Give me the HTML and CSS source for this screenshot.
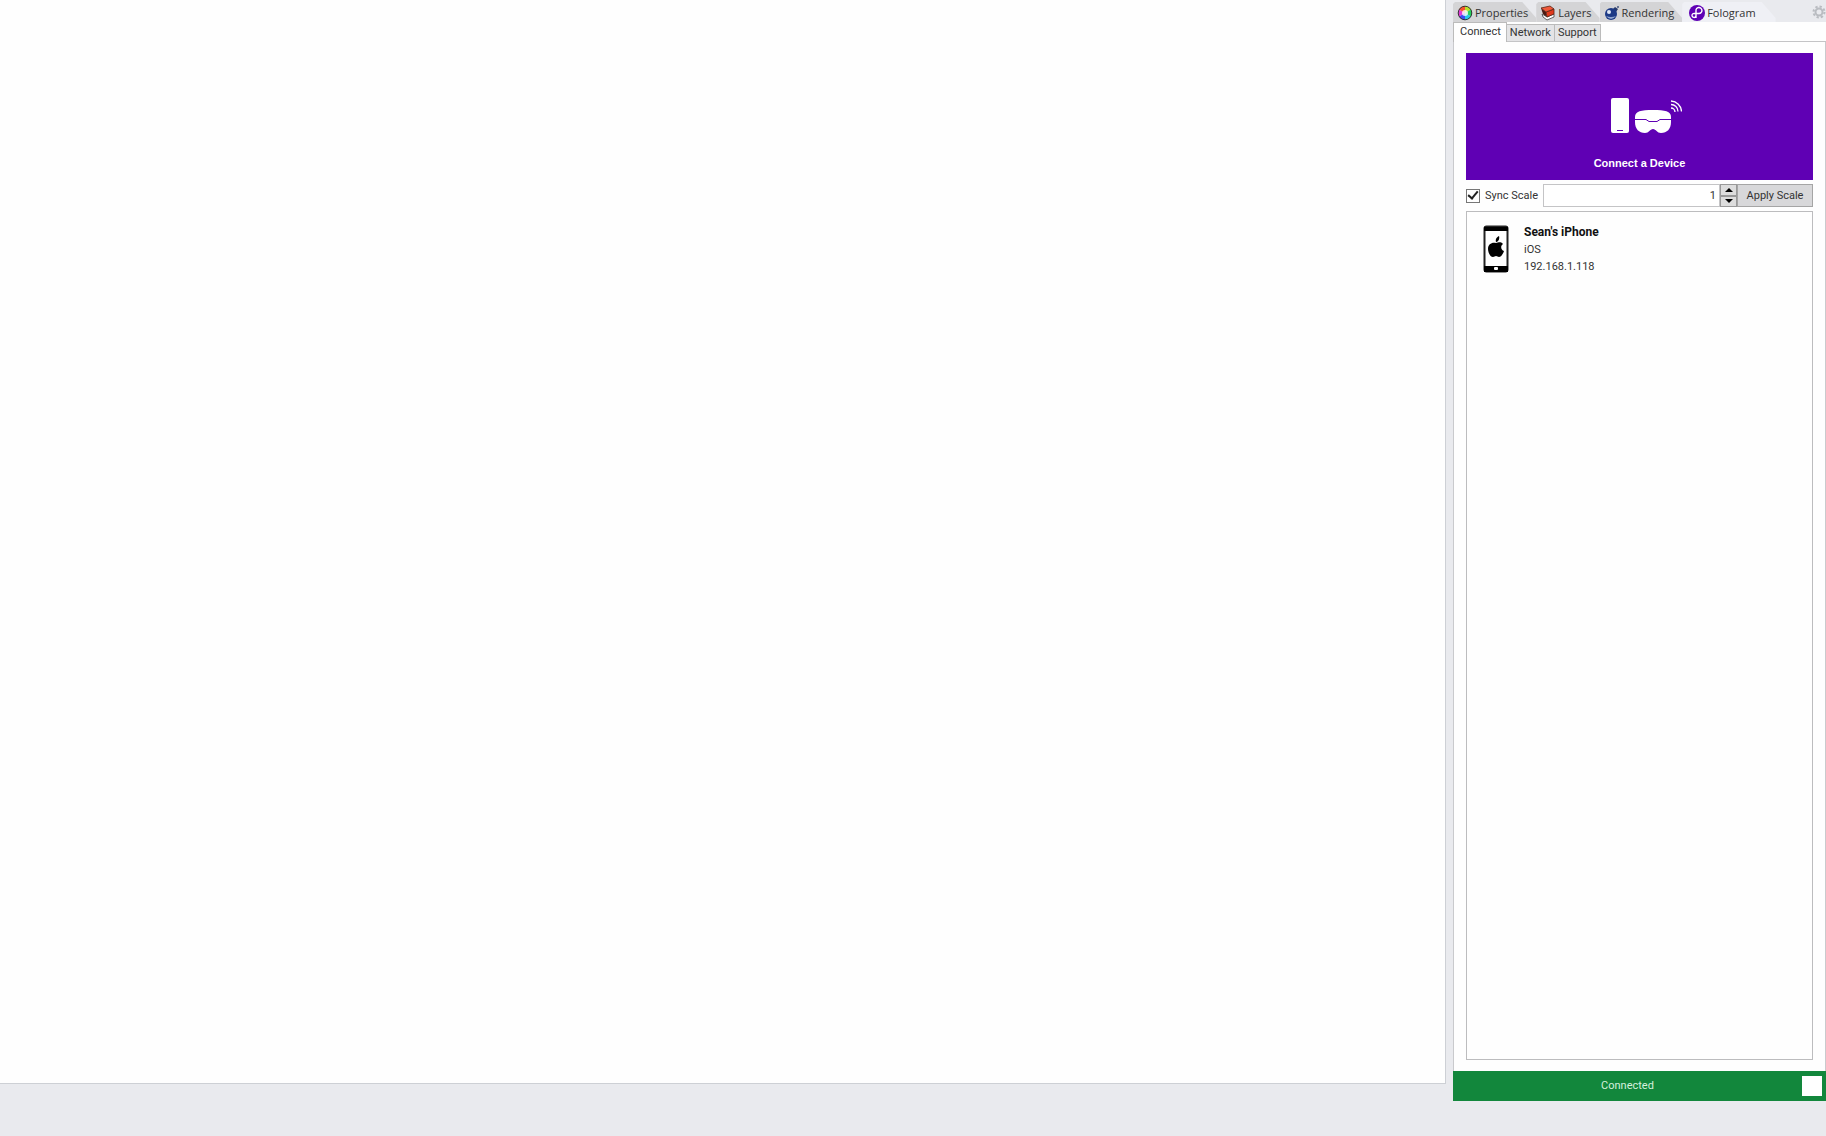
FILE: index.html
```html
<!DOCTYPE html>
<html lang="en">
	<head>
		<meta charset="utf-8">
		<title>Fologram</title>
		<link rel="stylesheet" href="styles.css">
	</head>
	<body>
<main class="viewport"></main>
<aside class="panel">
	<nav class="dock-tabs">
		<button type="button" class="dock-tab">
			<svg width="16" height="16" viewBox="0 0 16 16">
				<path d="M8 8V1A7 7 0 0 1 14 4.500z" fill="#b8e02a"/>
				<path d="M8 8L14 4.500A7 7 0 0 1 14 11.500z" fill="#25d05a"/>
				<path d="M8 8L14 11.500A7 7 0 0 1 8 15z" fill="#28c8e8"/>
				<path d="M8 8V15A7 7 0 0 1 2 11.500z" fill="#3a4cf0"/>
				<path d="M8 8L2 11.500A7 7 0 0 1 2 4.500z" fill="#e03ad8"/>
				<path d="M8 8L2 4.500A7 7 0 0 1 8 1z" fill="#f5522c"/>
				<circle cx="8" cy="8" r="3" fill="#fff" opacity=".8"/>
				<circle cx="8" cy="8" r="6.800" fill="none" stroke="#333" stroke-width="1"/>
			</svg>Properties</button>
		<button type="button" class="dock-tab">
			<svg width="16" height="16" viewBox="0 0 16 16">
				<path d="M2 9L7 12L14 9V12L7 15L3 12z" fill="#fff" stroke="#444" stroke-width=".8"/>
				<path d="M1 3L6 7L7 12L3 9z" fill="#4a1a12"/>
				<path d="M6 7L14 4V9L7 12z" fill="#e03a1e" stroke="#5b2414" stroke-width=".8"/>
				<path d="M1 3L10 1L14 4L6 7z" fill="#f0583a" stroke="#5b2414" stroke-width=".8"/>
			</svg>Layers</button>
		<button type="button" class="dock-tab">
			<svg width="16" height="16" viewBox="0 0 16 16">
				<path d="M9 4L11 2L14 4L12 7z" fill="#25386b"/>
				<circle cx="14" cy="2" r="1" fill="#49597f"/>
				<circle cx="7" cy="9" r="6" fill="#1d3a86"/>
				<path d="M2 11Q7 17 12 11Q7 13 2 11z" fill="#8fa5cf"/>
				<circle cx="5" cy="7" r="2" fill="#dfe7f6"/>
			</svg>Rendering</button>
		<button type="button" class="dock-tab active">
			<svg width="16" height="16" viewBox="0 0 16 16">
				<circle cx="8" cy="8" r="8" fill="#5f00b4"/>
				<g fill="none" stroke="#fff" stroke-width="1.400">
					<path d="M7 13V6A3 3 0 1 1 10 8.500H5.500A2 2 0 1 0 7 10.500"/>
				</g>
			</svg>Fologram</button>
		<button type="button" class="gear" aria-label="Panel options">
			<svg width="14" height="14" viewBox="0 0 14 14">
				<circle cx="7" cy="7" r="5.500" fill="none" stroke="#b9bcc1" stroke-width="2" stroke-dasharray="2.300 2"/>
				<circle cx="7" cy="7" r="3.500" fill="none" stroke="#b9bcc1" stroke-width="2"/>
			</svg>
		</button>
	</nav>
	<nav class="page-tabs">
		<button type="button" class="page-tab active">Connect</button>
		<button type="button" class="page-tab">Network</button>
		<button type="button" class="page-tab">Support</button>
	</nav>
	<section class="page">
		<button type="button" class="connect">
			<svg width="84" height="40" viewBox="-12 0 84 40">
				<rect x="1" y="4" width="18" height="35" rx="2" fill="#fff"/>
				<path d="M7 36.500H13" stroke="#5f00b4"/>
				<path d="M25 23C25 17 31 16 43 16S61 17 61 23V28C61 35 57 39 51 39C47 39 46 35 43 35S39 39 35 39C29 39 25 35 25 28z" fill="#fff"/>
				<path d="M25 25.500H36L39 27.500H47L50 25.500H61" fill="none" stroke="#5f00b4"/>
				<g fill="none" stroke="#fff" stroke-width="1.300">
					<path d="M61 14A4 4 0 0 1 65 18M61 10.500A7 7 0 0 1 68 17.500M61 7A11 11 0 0 1 71.500 17.500"/>
				</g>
			</svg>
			<span>Connect a Device</span>
		</button>
		<form class="scale">
			<label class="sync"><input type="checkbox" checked>Sync Scale</label>
			<input type="text" class="amount" value="1" aria-label="Scale">
			<div class="spinner">
				<button type="button" aria-label="Increase"><svg width="8" height="5" viewBox="0 0 8 5"><path d="M0 5L4 1L8 5z"/></svg></button>
				<button type="button" aria-label="Decrease"><svg width="8" height="5" viewBox="0 0 8 5"><path d="M0 0L4 4L8 0z"/></svg></button>
			</div>
			<button type="button" class="apply">Apply Scale</button>
		</form>
		<ul class="devices">
			<li class="device">
				<svg width="26" height="50" viewBox="0 -1 26 50">
					<rect x="1.500" y="1.500" width="23" height="45" rx="2" fill="#fff" stroke="#222" stroke-width="2"/>
					<path d="M1 2H25V6H1zM1 41H25V47H1z" fill="#000"/>
					<rect x="11" y="42" width="4" height="3" rx="1" fill="#fff"/>
					<path d="M13 18C15 18 17 16 20 19C17 21 18 25 21 26C20 29 18 32 16 32C15 32 14 31 13 31S11 32 10 32C7 32 5 27 5 24C5 19 9 17 13 18zM13 17C12 14 14 12 16 11C17 14 15 17 13 17z" fill="#000"/>
				</svg>
				<div>
					<strong>Sean's iPhone</strong>
					<p>iOS</p>
					<p>192.168.1.118</p>
				</div>
			</li>
		</ul>
	</section>
	<footer class="status">
		<span>Connected</span>
		<button type="button" aria-label="Status colour"></button>
	</footer>
</aside>
	</body>
</html>
```
FILE: styles.css
```css
* { box-sizing: border-box; }
body {
	margin: 0;
	height: 100vh;
	display: flex;
	gap: 7px;
	background: #e9eaee;
	color: #333;
	font: 11px/16px "Roboto", sans-serif;
}
button, input { font: inherit; color: inherit; margin: 0; }
button { padding: 0; border: 0; cursor: pointer; }
svg { display: block; flex: none; }
p { margin: 0; }
.viewport {
	flex: 1;
	margin-bottom: 52px;
	background: #fefefe;
	border: solid #cdd0d5;
	border-width: 0 1px 1px 0;
}
.panel {
	width: 373px;
	margin-bottom: 35px;
	display: flex;
	flex-direction: column;
}

/* docked panel tabs */
.dock-tabs {
	display: flex;
	height: 22px;
	padding-top: 2px;
	font-family: "Open Sans", sans-serif;
}
.dock-tab {
	display: flex;
	align-items: center;
	gap: 2px;
	padding: 2px 8px 0 4px;
	background: #d4d4d6;
	clip-path: polygon(0 2px, 2px 0, calc(100% - 14px) 0, 100% 16px, 100% 100%, 0 100%);
}
.dock-tab.active { background: #eff0f5; padding: 2px 20px 0 7px; }
.gear { margin-left: auto; background: none; }

.page-tabs {
	display: flex;
	align-items: flex-end;
	height: 20px;
	background: #fefefe;
	border-bottom: 1px solid #c4c4c6;
}
.page-tab {
	height: 17px;
	padding: 0 3px;
	background: #e4e4e6;
	border: solid #bbb;
	border-width: 1px 1px 0 0;
}
.page-tab.active {
	height: 20px;
	padding: 0 5px 1px 6px;
	margin-bottom: -1px;
	background: #fefefe;
	border-left-width: 1px;
}

.page {
	flex: 1;
	display: flex;
	flex-direction: column;
	padding: 11px 12px;
	background: #fefefe;
	border: solid #c9cacd;
	border-width: 0 1px;
}
.connect {
	height: 127px;
	display: flex;
	flex-direction: column;
	align-items: center;
	justify-content: flex-end;
	gap: 21px;
	padding-bottom: 9px;
	background: #5f00b4;
	color: #fff;
	font: bold 11px/16px "Liberation Sans", sans-serif;
}
.scale {
	display: flex;
	height: 23px;
	margin: 4px 0;
}
.sync {
	width: 77px;
	display: flex;
	align-items: center;
	gap: 5px;
}
.sync input {
	appearance: none;
	width: 14px;
	height: 14px;
	display: grid;
	place-items: center;
	background: #fff;
	border: 1px solid #777;
}
.sync input:checked::before {
	content: "";
	width: 8px;
	height: 4px;
	margin-top: -3px;
	border: solid #222;
	border-width: 0 0 2px 2px;
	transform: rotate(-50deg);
}
.amount {
	flex: 1;
	min-width: 0;
	padding: 0 3px;
	text-align: right;
	background: #fff;
	border: 1px solid #c4c4c6;
}
.spinner {
	width: 17px;
	display: grid;
}
.spinner button {
	display: grid;
	place-items: center;
	background: #ddd;
	border: 1px solid #999;
}
.apply {
	width: 76px;
	background: #d8d8da;
	border: 1px solid #a5a5a5;
}
.devices {
	flex: 1;
	margin: 0;
	padding: 12px 16px;
	list-style: none;
	border: 1px solid #bcbcbe;
}
.device {
	display: flex;
	gap: 15px;
	line-height: 17px;
}
.device strong { color: #111; font-size: 12px; }

.status {
	display: flex;
	align-items: center;
	height: 30px;
	padding-right: 4px;
	background: #12873c;
	color: #d5f0dd;
}
.status span { flex: 1; text-align: center; }
.status button {
	width: 20px;
	height: 20px;
	background: #fff;
}
```
